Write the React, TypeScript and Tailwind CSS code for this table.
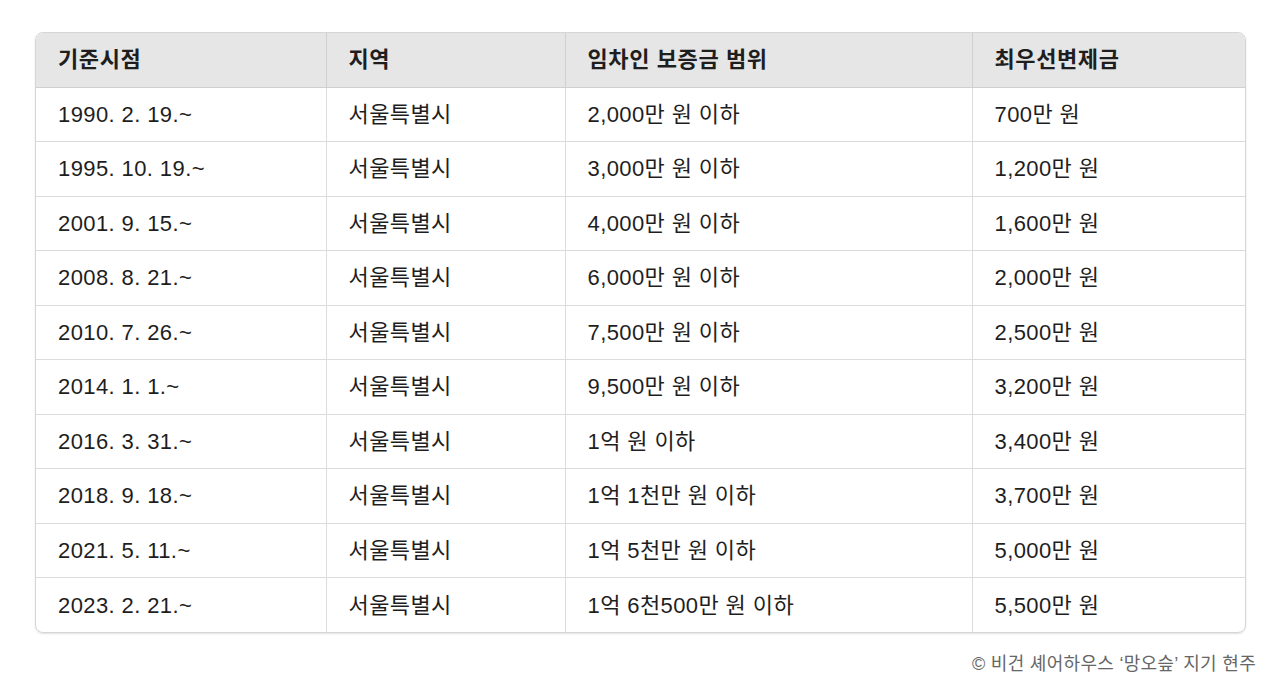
const rows: [string, string, string, string][] = [
  ['1990. 2. 19.~', '서울특별시', '2,000만 원 이하', '700만 원'],
  ['1995. 10. 19.~', '서울특별시', '3,000만 원 이하', '1,200만 원'],
  ['2001. 9. 15.~', '서울특별시', '4,000만 원 이하', '1,600만 원'],
  ['2008. 8. 21.~', '서울특별시', '6,000만 원 이하', '2,000만 원'],
  ['2010. 7. 26.~', '서울특별시', '7,500만 원 이하', '2,500만 원'],
  ['2014. 1. 1.~', '서울특별시', '9,500만 원 이하', '3,200만 원'],
  ['2016. 3. 31.~', '서울특별시', '1억 원 이하', '3,400만 원'],
  ['2018. 9. 18.~', '서울특별시', '1억 1천만 원 이하', '3,700만 원'],
  ['2021. 5. 11.~', '서울특별시', '1억 5천만 원 이하', '5,000만 원'],
  ['2023. 2. 21.~', '서울특별시', '1억 6천500만 원 이하', '5,500만 원'],
];

const headers = ['기준시점', '지역', '임차인 보증금 범위', '최우선변제금'];
const widths = ['w-[290px]', 'w-[239px]', 'w-[407px]', 'w-[275px]'];

const App = () => {
  return (
    <div className="min-h-[698px] bg-white pt-[32px] px-[35px] font-['Liberation_Sans','Noto_Sans_CJK_KR',sans-serif] text-[#1e1e1e]">
      <div className="w-[1211px] rounded-[8px] border border-[#d6d6d6] overflow-hidden shadow-[0_1px_2px_rgba(0,0,0,0.12)]">
        <table className="w-full table-fixed border-collapse">
          <thead>
            <tr className="h-[54px] bg-[#e6e6e6]">
              {headers.map((h, i) => (
                <th
                  key={h}
                  className={`${widths[i]} text-left font-bold text-[22px] tracking-[0.6px] pl-[22px] border-b border-[#d0d0d0] ${i > 0 ? 'border-l' : ''}`}
                >
                  {h}
                </th>
              ))}
            </tr>
          </thead>
          <tbody>
            {rows.map((r, ri) => (
              <tr key={ri} className="h-[54.5px]">
                {r.map((c, ci) => (
                  <td
                    key={ci}
                    className={`text-[22px] pl-[22px] tracking-[0.4px] border-[#dcdcdc] ${ri < rows.length - 1 ? 'border-b' : ''} ${ci > 0 ? 'border-l' : ''}`}
                  >
                    {c}
                  </td>
                ))}
              </tr>
            ))}
          </tbody>
        </table>
      </div>
      <p className="w-[1221px] text-right mt-[18px] text-[18px] tracking-[0.3px] text-[#666]">
        © 비건 셰어하우스 ‘망오슾’ 지기 현주
      </p>
    </div>
  );
};

export default App;
